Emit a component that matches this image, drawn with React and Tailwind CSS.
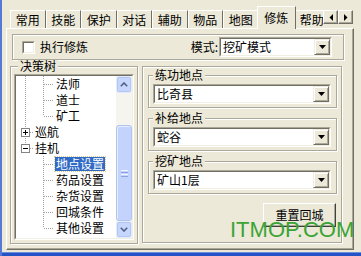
import React from 'react'

const TABS = ['常用', '技能', '保护', '对话', '辅助', '物品', '地图', '修炼', '帮助']

const TREE = [
  { text: '法师', level: 2, l1: 'full', l2: 'full' },
  { text: '道士', level: 2, l1: 'full', l2: 'full' },
  { text: '矿工', level: 2, l1: 'full', l2: 'half' },
  { text: '巡航', level: 1, l1: 'full', box: 'plus' },
  { text: '挂机', level: 1, l1: 'half', box: 'minus' },
  { text: '地点设置', level: 2, l2: 'full', selected: true },
  { text: '药品设置', level: 2, l2: 'full' },
  { text: '杂货设置', level: 2, l2: 'full' },
  { text: '回城条件', level: 2, l2: 'full' },
  { text: '其他设置', level: 2, l2: 'half' },
]

function Tab({ label, active }) {
  if (active) {
    return (
      <div className="relative z-10 -mx-[2px] w-[39.5px] h-[23px] shrink-0 flex items-center justify-center bg-[#ece9d8] border-t border-l border-r border-t-white border-l-white border-r-[#716f64]">
        {label}
      </div>
    )
  }
  return (
    <div className="mb-px w-[35.5px] h-[18px] shrink-0 flex items-center justify-center whitespace-nowrap border-t border-l border-r border-t-white border-l-white border-r-[#716f64]">
      {label}
    </div>
  )
}

function ArrowBtn({ dir }) {
  return (
    <div className="w-[15px] h-[14px] flex items-center justify-center bg-[#ece9d8] border border-t-white border-l-white border-b-[#716f64] border-r-[#716f64] shadow-[inset_-1px_-1px_0_#aca899]">
      <svg width="4" height="7" viewBox="0 0 4 7">
        {dir === 'left' ? <path d="M4 0V7L0.5 3.5Z" fill="#000" /> : <path d="M0 0V7L3.5 3.5Z" fill="#000" />}
      </svg>
    </div>
  )
}

function DropBtn() {
  return (
    <div className="w-[16px] shrink-0 flex items-center justify-center bg-[#ece9d8] border border-t-[#f1efe2] border-l-[#f1efe2] border-b-[#716f64] border-r-[#716f64] shadow-[inset_1px_1px_0_#ffffff,inset_-1px_-1px_0_#aca899]">
      <svg width="7" height="4" viewBox="0 0 7 4">
        <path d="M0 0H7L3.5 4Z" fill="#000" />
      </svg>
    </div>
  )
}

function Combo({ value, className }) {
  return (
    <div className={className}>
      <div className="h-full border border-t-[#aca899] border-l-[#aca899] border-b-white border-r-white">
        <div className="h-full flex bg-white border border-t-[#716f64] border-l-[#716f64] border-b-[#f1efe2] border-r-[#f1efe2]">
          <span className="flex-1 pl-[2px] leading-[16px] whitespace-nowrap">{value}</span>
          <DropBtn />
        </div>
      </div>
    </div>
  )
}

function TreeLines({ row }) {
  const dot = { stroke: '#a0a0a0', strokeWidth: 1, strokeDasharray: '1 1', shapeRendering: 'crispEdges' }
  if (row.level === 1) {
    return (
      <svg width="18" height="16" className="shrink-0">
        <line x1="9.5" y1="0" x2="9.5" y2={row.l1 === 'half' ? 8 : 16} {...dot} />
        <line x1="10" y1="8.5" x2="18" y2="8.5" {...dot} />
        <rect x="5.5" y="4.5" width="8" height="8" fill="#fff" stroke="#848284" shapeRendering="crispEdges" />
        <line x1="7" y1="8.5" x2="12" y2="8.5" stroke="#000" shapeRendering="crispEdges" />
        {row.box === 'plus' && <line x1="9.5" y1="6" x2="9.5" y2="11" stroke="#000" shapeRendering="crispEdges" />}
      </svg>
    )
  }
  return (
    <svg width="39" height="16" className="shrink-0">
      {row.l1 && <line x1="9.5" y1="0" x2="9.5" y2="16" {...dot} />}
      <line x1="27.5" y1="0" x2="27.5" y2={row.l2 === 'half' ? 8 : 16} {...dot} />
      <line x1="28" y1="8.5" x2="38" y2="8.5" {...dot} />
    </svg>
  )
}

function ScrollArrow({ up }) {
  return (
    <div className="h-[17px] shrink-0 flex items-center justify-center rounded-[3px] bg-[#c6d6fc] border border-[#e3ebfd] shadow-[inset_0_0_0_1px_#b2c6f2]">
      <svg width="8" height="5" viewBox="0 0 8 5">
        <path d={up ? 'M0.8 4.2L4 1L7.2 4.2' : 'M0.8 0.8L4 4L7.2 0.8'} fill="none" stroke="#4d6185" strokeWidth="1.6" />
      </svg>
    </div>
  )
}

function Scrollbar() {
  return (
    <div className="w-[16px] shrink-0 flex flex-col bg-[#f5f4ef]">
      <ScrollArrow up />
      <div className="h-[32px] shrink-0" />
      <div className="h-[96px] shrink-0 rounded-[3px] bg-[#c3d3fc] border border-[#b0c4f0] shadow-[inset_1px_1px_0_#e6edfe] flex flex-col items-center justify-center gap-[1px]">
        <div className="w-[7px] h-[1px] bg-[#eef3fe]" />
        <div className="w-[7px] h-[1px] bg-[#8ca4dc]" />
        <div className="w-[7px] h-[1px] bg-[#eef3fe]" />
        <div className="w-[7px] h-[1px] bg-[#8ca4dc]" />
      </div>
      <div className="flex-1" />
      <ScrollArrow />
    </div>
  )
}

function Tree() {
  return (
    <div className="ml-[3px] mt-[2px] w-[120px] h-[166px] border border-t-[#aca899] border-l-[#aca899] border-b-white border-r-white">
      <div className="h-full flex bg-white border border-t-[#716f64] border-l-[#716f64] border-b-[#f1efe2] border-r-[#f1efe2]">
        <div className="flex-1 flex flex-col overflow-hidden">
          {TREE.map((row) => (
            <div key={row.text} className="h-[16px] shrink-0 flex items-center">
              <TreeLines row={row} />
              <span
                className={
                  row.selected
                    ? 'px-[1px] leading-[14px] whitespace-nowrap bg-[#316ac5] text-white outline outline-1 outline-dotted outline-[#d8cf98]'
                    : 'px-[1px] leading-[14px] whitespace-nowrap'
                }
              >
                {row.text}
              </span>
            </div>
          ))}
        </div>
        <Scrollbar />
      </div>
    </div>
  )
}

function Group({ label, value }) {
  return (
    <fieldset className="w-[189px] h-[39px] ml-[5px] border border-[#aca899] shadow-[inset_1px_1px_0_#ffffff,1px_1px_0_#ffffff]">
      <legend className="ml-[4px] px-[2px] leading-[12px] bg-[#ece9d8]">{label}</legend>
      <Combo value={value} className="ml-[4px] mt-[3px] w-[178px] h-[20px]" />
    </fieldset>
  )
}

export default function App() {
  return (
    <div className="relative w-[361px] h-[256px] overflow-hidden box-border border-l-2 border-l-[#5479d6] bg-[#ece9d8] text-black text-[12px] leading-[14px] font-['Noto_Sans_CJK_SC','Liberation_Sans',sans-serif] flex flex-col">
      {/* tab strip */}
      <div className="relative z-10 h-[29px] shrink-0 flex">
        <div className="ml-[4px] w-[317px] h-full pl-[4px] flex items-end overflow-hidden">
          {TABS.map((t) => (
            <Tab key={t} label={t} active={t === '修炼'} />
          ))}
        </div>
        <div className="mt-[10px] flex">
          <ArrowBtn dir="left" />
          <ArrowBtn dir="right" />
        </div>
      </div>

      {/* tab page */}
      <div className="-mt-px ml-[4px] w-[348px] h-[222px] shrink-0 border border-t-white border-l-white border-b-[#716f64] border-r-[#716f64] shadow-[inset_-1px_-1px_0_#aca899] flex flex-col">
        <div className="ml-[5px] mt-[5px] w-[332px] h-[26px] shrink-0 border border-[#aca899] shadow-[inset_1px_1px_0_#ffffff,1px_1px_0_#ffffff] flex items-center">
          <div className="ml-[9px] w-[13px] h-[13px] border border-t-[#aca899] border-l-[#aca899] border-b-white border-r-white">
            <div className="w-full h-full bg-white border border-t-[#716f64] border-l-[#716f64] border-b-[#f1efe2] border-r-[#f1efe2]" />
          </div>
          <span className="ml-[5px]">执行修炼</span>
          <span className="ml-auto mr-[1px]">模式:</span>
          <Combo value="挖矿模式" className="mr-[11px] w-[113px] h-[20px]" />
        </div>

        <div className="flex items-start">
          <fieldset className="ml-[3px] w-[128px] h-[184px] border border-[#aca899] shadow-[inset_1px_1px_0_#ffffff,1px_1px_0_#ffffff]">
            <legend className="ml-[7px] px-[2px] leading-[12px] bg-[#ece9d8]">决策树</legend>
            <Tree />
          </fieldset>

          <div className="ml-[4px] mt-[6px] w-[200px] h-[177px] border border-[#aca899] shadow-[inset_1px_1px_0_#ffffff,1px_1px_0_#ffffff] flex flex-col">
            <div className="mt-[2px] flex flex-col gap-[4px]">
              <Group label="练功地点" value="比奇县" />
              <Group label="补给地点" value="蛇谷" />
              <Group label="挖矿地点" value="矿山1层" />
            </div>
            <button className="self-end mt-[9px] mr-[5px] w-[73px] h-[24px] bg-[#ece9d8] border border-t-white border-l-white border-b-[#404040] border-r-[#404040] shadow-[inset_-1px_-1px_0_#aca899]">
              重置回城
            </button>
          </div>
        </div>
      </div>

      <div className="mt-[2px] h-[4px] shrink-0 bg-[#2453c6] border-t border-t-[#6d8fe0]" />

      <div className="absolute left-[228px] top-[219px] text-[22px] leading-[22px] font-['Liberation_Sans',sans-serif] text-[#3aa436] whitespace-nowrap">
        ITMOP.COM
      </div>
    </div>
  )
}
